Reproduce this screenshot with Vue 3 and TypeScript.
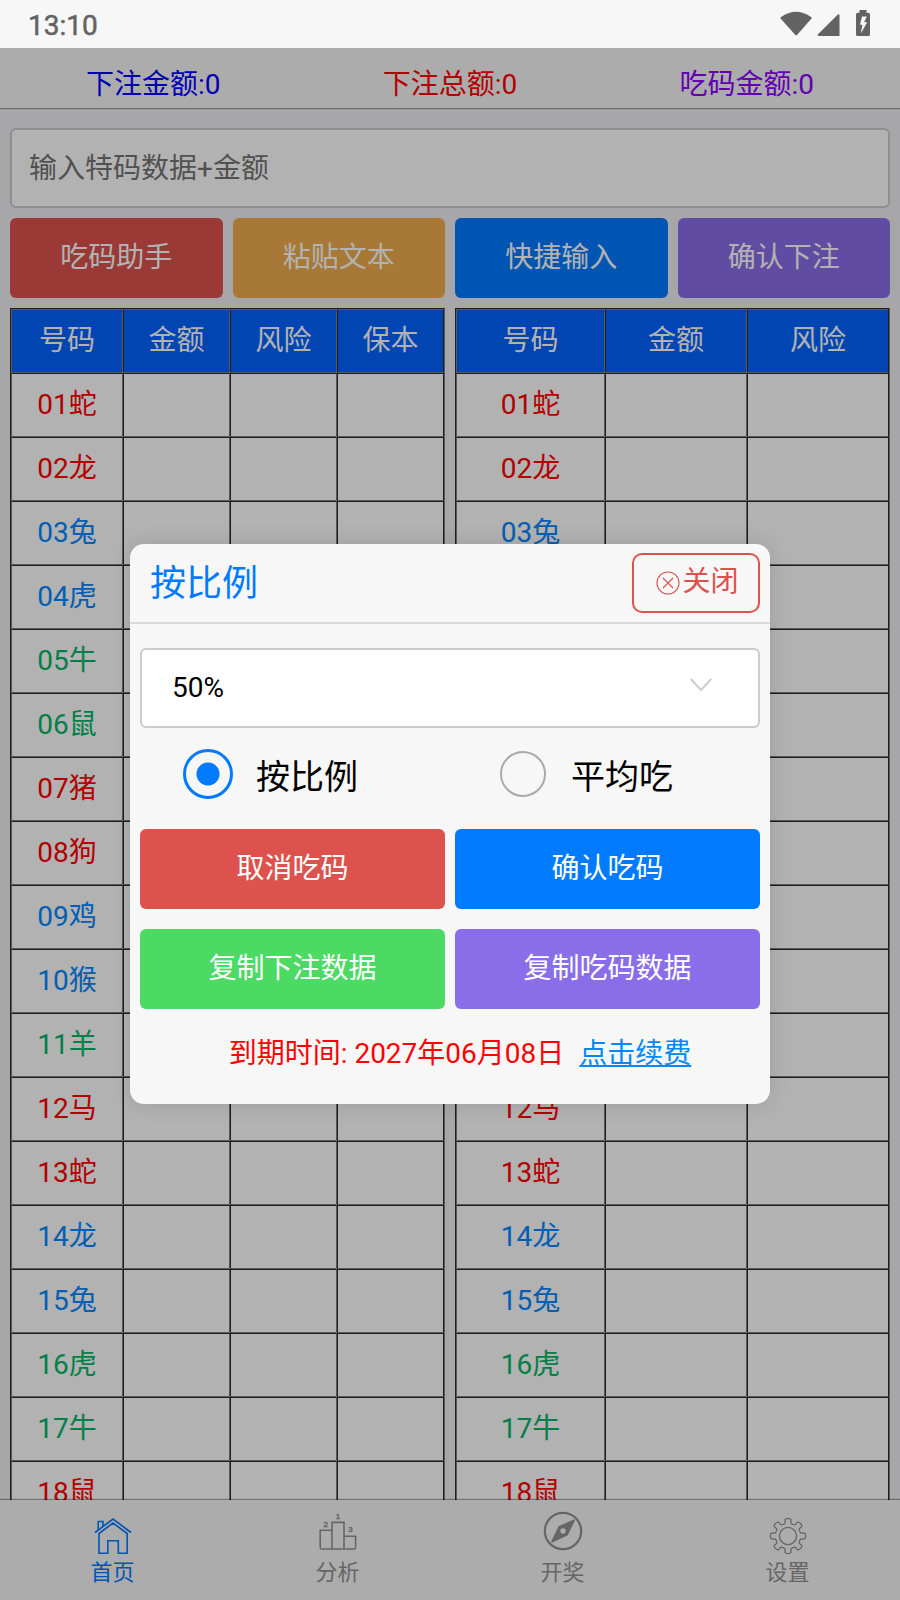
<script setup lang="ts">
interface Row { label: string; tone: 'red' | 'blue' | 'green' }

const tones = { r: 'red', b: 'blue', g: 'green' } as const
const toneOrder = 'rrbbggrrbbgrrbbggr'
const zodiac = '蛇龙兔虎牛鼠猪狗鸡猴羊马'

const rows: Row[] = Array.from(toneOrder, (t, i) => ({
  label: String(i + 1).padStart(2, '0') + zodiac[i % 12],
  tone: tones[t as keyof typeof tones],
}))

const tables = [
  { id: 'four', heads: ['号码', '金额', '风险', '保本'] },
  { id: 'three', heads: ['号码', '金额', '风险'] },
]

const actions = [
  { text: '吃码助手', tone: 'danger' },
  { text: '粘贴文本', tone: 'warning' },
  { text: '快捷输入', tone: 'primary' },
  { text: '确认下注', tone: 'royal' },
]

const modalActions = [
  { text: '取消吃码', tone: 'danger' },
  { text: '确认吃码', tone: 'primary' },
  { text: '复制下注数据', tone: 'success' },
  { text: '复制吃码数据', tone: 'royal' },
]

/* Outline of the eight-toothed settings gear, in a 38x38 box. */
function gearPath(): string {
  const c = 19
  const pt = (r: number, deg: number) => {
    const a = (deg * Math.PI) / 180
    return `${(c + r * Math.cos(a)).toFixed(2)} ${(c + r * Math.sin(a)).toFixed(2)}`
  }
  let d = `M${pt(13, -14)}`
  for (let i = 0; i < 8; i++) {
    const a = i * 45
    d += ` Q${pt(13.6, a - 12)} ${pt(14.6, a - 11.5)} L${pt(16.8, a - 10.5)} Q${pt(17.7, a - 8)} ${pt(17.7, a)}`
    d += ` Q${pt(17.7, a + 8)} ${pt(16.8, a + 10.5)} L${pt(14.6, a + 11.5)} Q${pt(13.6, a + 12)} ${pt(13, a + 14)}`
    d += ` Q${pt(12.2, a + 22.5)} ${pt(13, a + 31)}`
  }
  return d + 'Z'
}
const gear = gearPath()
</script>

<template>
  <div class="screen">
    <div class="status">
      <span class="clock">13:10</span>
      <svg class="status-icons" width="92" height="28" viewBox="0 0 92 28">
        <path d="M.8 7.2Q16 -3.8 31.4 7.2Q32 7.8 31.5 8.4L17.3 24.7Q16.2 25.8 15.1 24.7L.6 8.4Q.2 7.8.8 7.2Z" />
        <path d="M59.5 5V26H38.5Q37 25.4 38 24.2L57.6 4.7Q59 3.6 59.5 5Z" />
        <path fill-rule="evenodd" d="M79.5 0H86.5V2.8H88.4Q90 2.8 90 4.4V24.4Q90 26 88.4 26H77.6Q76 26 76 24.4V4.4Q76 2.8 77.6 2.8H79.5ZM82 6.4L80 14.8H82.4L80.8 23.5L87.2 12.2H84.2L86.8 6.4Z" />
      </svg>
    </div>

    <div class="app">
      <header class="totals">
        <span class="t-blue">下注金额:0</span>
        <span class="t-red">下注总额:0</span>
        <span class="t-purple">吃码金额:0</span>
      </header>

      <main class="content">
        <div class="entry">输入特码数据+金额</div>
        <div class="actions">
          <button v-for="a in actions" :key="a.text" class="btn" :class="a.tone">{{ a.text }}</button>
        </div>
        <div class="tables">
          <div v-for="t in tables" :key="t.id" class="table">
            <div class="tr head" :class="t.id">
              <span v-for="h in t.heads" :key="h" class="td">{{ h }}</span>
            </div>
            <div v-for="r in rows" :key="r.label" class="tr" :class="t.id">
              <span v-for="(h, i) in t.heads" :key="h" class="td" :class="r.tone">{{ i === 0 ? r.label : '' }}</span>
            </div>
          </div>
        </div>
      </main>

      <nav class="tabs">
        <a class="tab active">
          <span class="icon">
            <svg width="38" height="38" viewBox="0 0 38 38" class="line">
              <path d="M1 15.5L19 2L37 15.5M4.2 13V4.5H9V9.2M5 16.5V36.2H13.8V23.8H24.3V36.2H33.2V16.5L19 6Z" />
            </svg>
          </span>
          <span>首页</span>
        </a>
        <a class="tab">
          <span class="icon podium">
            <svg width="38" height="38" viewBox="0 0 38 38" class="line">
              <path d="M1.5 17.2H13V36H2.8Q1.2 36 1.2 34.4V17.2ZM13 36V9.4H25V36M25 23.2H36.6V34.4Q36.6 36 35 36H13" />
              <text x="6.8" y="14">2</text><text x="19" y="6.4">1</text><text x="31.4" y="19">3</text>
            </svg>
          </span>
          <span>分析</span>
        </a>
        <a class="tab">
          <span class="icon compass">
            <svg width="40" height="40" viewBox="0 0 40 40">
              <circle cx="20" cy="20" r="18.2" fill="none" stroke="currentColor" stroke-width="2.2" />
              <path fill="currentColor" fill-rule="evenodd" d="M30.6 8.4L15.5 15.2L8.2 30.4Q8 31.8 9.5 31.4L24.8 24.3L31.8 9.7Q32 8 30.6 8.4ZM20 17.3A2.7 2.7 0 1 0 20 22.7A2.7 2.7 0 1 0 20 17.3Z" />
            </svg>
          </span>
          <span>开奖</span>
        </a>
        <a class="tab">
          <span class="icon">
            <svg width="38" height="38" viewBox="0 0 38 38" class="line thin">
              <path :d="gear" /><circle cx="19" cy="19" r="8.6" />
            </svg>
          </span>
          <span>设置</span>
        </a>
      </nav>

      <div class="backdrop">
        <section class="modal">
          <div class="modal-head">
            <h2>按比例</h2>
            <button class="close">
              <svg width="24" height="24" viewBox="0 0 24 24">
                <circle cx="12" cy="12" r="11" /><path d="M7 7L17 17M17 7L7 17" />
              </svg>
              <span>关闭</span>
            </button>
          </div>
          <div class="modal-body">
            <div class="select">
              <span>50%</span>
              <svg width="22" height="14" viewBox="0 0 22 14"><path d="M.8 1L11 12L21.2 1" /></svg>
            </div>
            <div class="radios">
              <label class="radio first"><i class="dot on"></i><span>按比例</span></label>
              <label class="radio"><i class="dot"></i><span>平均吃</span></label>
            </div>
            <div class="modal-actions">
              <button v-for="a in modalActions" :key="a.text" class="btn" :class="a.tone">{{ a.text }}</button>
            </div>
            <p class="expiry">到期时间: 2027年06月08日<a>点击续费</a></p>
          </div>
        </section>
      </div>
    </div>
  </div>
</template>

<style>
body { margin: 0; overflow: hidden; }
</style>

<style scoped>
.screen {
  width: 900px; height: 1600px; overflow: hidden;
  display: flex; flex-direction: column;
  font-family: Roboto, "Noto Sans CJK SC", sans-serif;
  font-size: 28px; color: #000;
}
.screen *, .screen { box-sizing: border-box; }
.status {
  height: 48px; flex: none; background: #f7f7f7; color: #636363;
  display: flex; align-items: center; justify-content: space-between;
  padding: 2px 28px 0 28px;
}
.clock { line-height: 48px; padding-top: 1px; -webkit-text-stroke: .5px #636363; }
.status-icons { fill: #636363; margin-bottom: 2px; }
.app {
  position: relative; flex: 1; min-height: 0;
  display: flex; flex-direction: column; background: #efeff4;
}
.totals {
  height: 60px; flex: none; padding: 2px 5px 0;
  display: grid; grid-template-columns: repeat(3, 1fr); text-align: center;
  line-height: 70px; background: #f7f7f7;
  box-shadow: 0 1px 1px rgba(0, 0, 0, .35);
}
.t-blue { color: #00f; }
.t-red { color: #f00; }
.t-purple { color: #9000ff; }
.content { flex: 1; min-height: 0; overflow: hidden; padding: 20px 10px 0; }
.entry {
  height: 80px; line-height: 78px; padding: 0 17px;
  background: #fff; border: 2px solid #ccc; border-radius: 6px; color: #757575;
}
.actions { display: grid; grid-template-columns: repeat(4, 1fr); gap: 10px; margin: 10px 0; }
.btn {
  height: 80px; padding: 0 0 6px; border: 0; border-radius: 6px;
  font: inherit; color: #fff;
}
.danger { background: #dd524d; }
.warning { background: #f0ad4e; }
.primary { background: #007aff; }
.royal { background: #8a6de9; }
.success { background: #4cd964; }
.tables { display: grid; grid-template-columns: 1fr 1fr; gap: 10px; }
.table { border: 1px solid #2c2c2c; border-right-color: #808080; }
.tr { display: grid; height: 64px; }
.four { grid-template-columns: 112px 107px 107px 107px; }
.three { grid-template-columns: 149px 142px 142px; }
.td {
  background: #fff; text-align: center; line-height: 61px;
  border: 1px solid #808080; border-top-color: #2c2c2c; border-left-color: #2c2c2c;
}
.td:first-child { border-left-color: #808080; }
.td:last-child { border-right-color: #2c2c2c; }
.head .td { background: #0064ff; color: #fff; border-top-color: #808080; }
.red { color: #f00; }
.blue { color: #08f; }
.green { color: #00b868; }
.tabs {
  height: 100px; flex: none; display: grid; grid-template-columns: repeat(4, 1fr);
  background: #f7f7f7; box-shadow: 0 -1px 1px rgba(0, 0, 0, .35);
}
.tab {
  display: flex; flex-direction: column; align-items: center;
  font-size: 22px; line-height: 34px; color: #929292;
}
.tab.active { color: #007aff; }
.icon { height: 56px; padding-top: 17px; }
.icon.podium { padding-top: 13px; }
.icon.compass { padding-top: 11px; }
.icon svg { display: block; overflow: visible; }
.line { fill: none; stroke: currentColor; stroke-width: 1.6; }
.thin { stroke-width: 1.3; }
.line text {
  fill: currentColor; stroke: currentColor; stroke-width: .4; text-anchor: middle;
  font: 8px "Liberation Sans", sans-serif;
}
.backdrop {
  position: absolute; inset: 0; background: rgba(0, 0, 0, .3);
  display: flex; justify-content: center; align-items: flex-start; padding-top: 496px;
}
.modal {
  width: 640px; height: 560px; background: #f7f7f7; border-radius: 14px;
  box-shadow: 0 0 20px rgba(0, 0, 0, .12);
}
.modal-head {
  height: 80px; border-bottom: 2px solid #d9d9d9; padding: 0 10px 0 20px;
  display: flex; align-items: center; justify-content: space-between;
}
h2 { margin: 0; padding-bottom: 7px; font-weight: 400; font-size: 36px; color: #007aff; }
.close {
  width: 128px; height: 60px; padding: 0 0 8px 3px; font: inherit; color: #dd524d;
  background: transparent; border: 2px solid currentColor; border-radius: 10px;
  display: flex; align-items: center; justify-content: center; gap: 2px;
}
.close svg { fill: none; stroke: currentColor; stroke-width: 1.1; margin-top: 7px; }
.modal-body { padding: 24px 10px 0; }
.select {
  height: 80px; border: 2px solid #ccc; border-radius: 6px; background: #fff;
  display: flex; align-items: center; justify-content: space-between; padding: 0 46px 0 30px;
}
.select span { padding-bottom: 2px; }
.select svg { fill: none; stroke: #ccc; stroke-width: 2; margin-bottom: 6px; }
.radios { height: 101px; display: flex; padding: 0 0 9px 42px; }
.radio { display: flex; align-items: center; font-size: 34px; }
.radio.first { width: 314px; }
.dot {
  flex: none; width: 46px; height: 46px; border: 2px solid #aaa; border-radius: 50%;
  margin: 0 25px 0 4px;
}
.dot.on {
  width: 50px; height: 50px; margin: 0 23px 0 1px; border: 3px solid #007aff;
  background: radial-gradient(circle, #007aff 11px, transparent 12px);
}
.modal-actions { display: grid; grid-template-columns: 1fr 1fr; gap: 20px 10px; }
.expiry { margin: 24px 0 0; text-align: center; line-height: 42px; color: #f00; padding-left: 20px; }
.expiry a { margin-left: 15px; color: #08f; text-decoration: underline; }
</style>
